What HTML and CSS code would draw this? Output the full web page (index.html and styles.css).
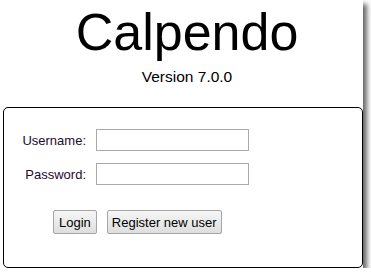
FILE: index.html
```html
<!DOCTYPE html>
<html lang="en">
  <head>
    <meta charset="UTF-8" />
    <meta name="viewport" content="width=device-width, initial-scale=1.0" />
    <title>Calpendo</title>
    <link rel="stylesheet" href="styles.css">
  </head>
  <body>
    <div class="page">
      <div class="header">
        <h1 class="title">Calpendo</h1>
        <div class="version">Version 7.0.0</div>
      </div>

      <form class="login-box" onsubmit="return false">
        <div class="fields">
          <label for="username">Username:</label>
          <input type="text" id="username" />
          <label for="password">Password:</label>
          <input type="password" id="password" />
        </div>
        <div class="actions">
          <button type="submit">Login</button>
          <button type="button" class="register">Register new user</button>
        </div>
      </form>
    </div>
  </body>
</html>
```

FILE: styles.css
```css
html {
  background: #ffffff;
}

body {
  margin: 0;
  font-family: 'Liberation Sans', Arial, sans-serif;
  color: #000;
}

.page {
  width: 363px;
  height: 268px;
  background: #fff;
  box-shadow: 4px 4px 5px rgba(0, 0, 0, 0.6);
  overflow: hidden;
}

.header {
  padding: 2px 0 0 11px;
  text-align: center;
}

.title {
  margin: 0;
  font-size: 52px;
  font-weight: normal;
  line-height: 60px;
}

.version {
  margin-top: 5px;
  font-size: 15.5px;
  line-height: 20px;
}

.login-box {
  box-sizing: border-box;
  width: 360px;
  height: 161px;
  margin: 20px 0 0 3px;
  padding: 21px 0 0 16px;
  border: 1px solid #000;
  border-radius: 5px;
}

.fields {
  display: grid;
  grid-template-columns: 66px 153px;
  column-gap: 10px;
  row-gap: 12px;
  align-items: center;
}

.fields label {
  text-align: right;
  font-size: 13px;
  color: #1e0a2c;
}

.fields input {
  box-sizing: border-box;
  width: 153px;
  height: 22px;
  margin: 0;
  padding: 2px 4px;
  border: 1px solid #a9a9a9;
  font-family: inherit;
  font-size: 13px;
}

.actions {
  display: flex;
  gap: 10px;
  margin: 25px 0 0 33px;
}

.actions button {
  height: 24px;
  margin: 0;
  padding: 0 5px;
  border: 1px solid #a5a5a5;
  border-radius: 2px;
  background: linear-gradient(#f6f6f6, #dedede);
  font-family: inherit;
  font-size: 13px;
  color: #000;
}

.actions .register {
  padding: 0 4px;
}
```
